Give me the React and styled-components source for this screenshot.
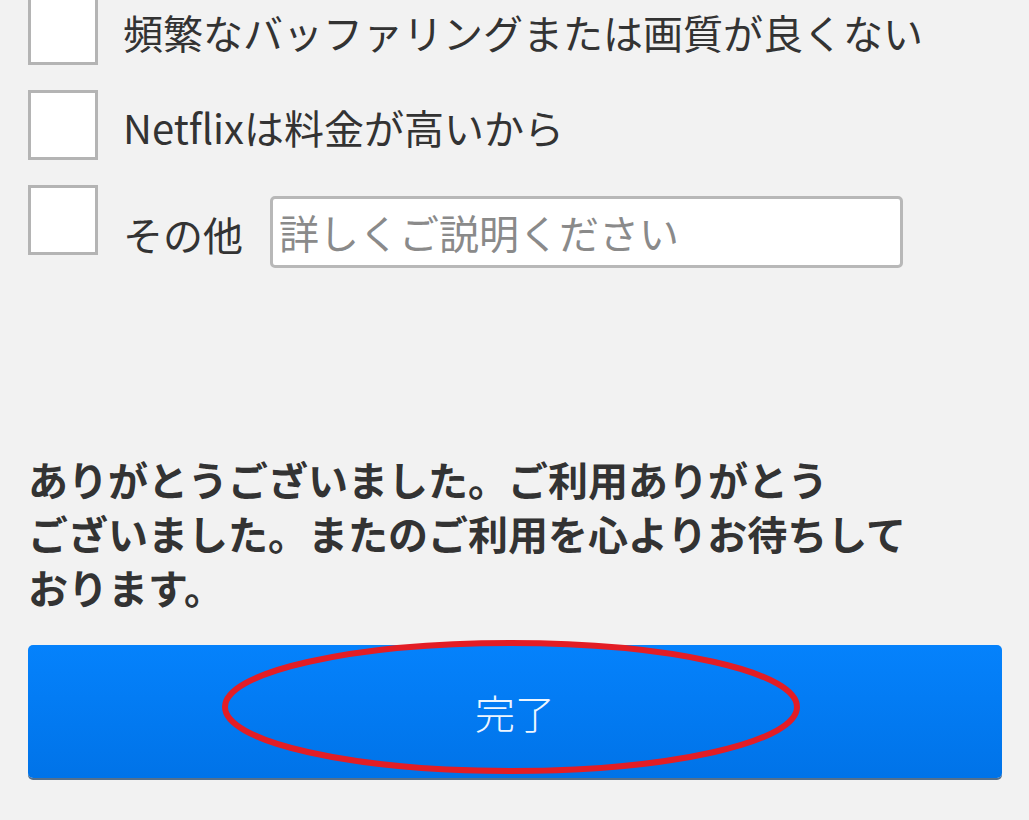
import React from "react";
import styled, { createGlobalStyle } from "styled-components";

const GlobalStyle = createGlobalStyle`
  html, body {
    margin: 0;
    padding: 0;
    background: #f2f2f2;
  }
  body {
    font-family: "Noto Sans CJK JP", "Noto Sans", sans-serif;
    color: #333;
    overflow: hidden;
  }
`;

const reasons = [
  { id: 1, label: "頻繁なバッファリングまたは画質が良くない" },
  { id: 2, label: "Netflixは料金が高いから" },
];

const App = () => {
  return (
    <>
      <GlobalStyle />
      <Page>
        <OptionList>
          {reasons.map((r) => (
            <OptionRow key={r.id}>
              <CheckBox />
              <OptionLabel>{r.label}</OptionLabel>
            </OptionRow>
          ))}
          <OptionRow $top>
            <CheckBox />
            <OtherGroup>
              <OptionLabel>その他</OptionLabel>
              <DetailInput placeholder="詳しくご説明ください" />
            </OtherGroup>
          </OptionRow>
        </OptionList>

        <Thanks>
          ありがとうございました。ご利用ありがとう
          <br />
          ございました。またのご利用を心よりお待ちして
          <br />
          おります。
        </Thanks>

        <DoneButton>
          完了
          <Mark viewBox="0 0 580 136" aria-hidden="true">
            <ellipse cx="290" cy="68" rx="286" ry="64" fill="none" stroke="#e31d25" strokeWidth="6" />
          </Mark>
        </DoneButton>
      </Page>
    </>
  );
};

export default App;

const Page = styled.main`
  width: 1029px;
  height: 820px;
  box-sizing: border-box;
  padding: 0 27px 0 28px;
  display: flex;
  flex-direction: column;
`;

const OptionList = styled.ul`
  list-style: none;
  margin: -5px 0 0;
  padding: 0;
  display: flex;
  flex-direction: column;
  gap: 25px;
`;

const OptionRow = styled.li`
  display: flex;
  align-items: ${(p) => (p.$top ? "flex-start" : "center")};
  height: 70px;
`;

const CheckBox = styled.span`
  flex: none;
  width: 70px;
  height: 70px;
  box-sizing: border-box;
  border: 3px solid #b4b4b4;
  background: #fff;
`;

const OptionLabel = styled.span`
  margin-left: 25px;
  font-size: 40px;
  line-height: 50px;
  color: #333;
  white-space: nowrap;
  padding-top: 3px;
`;

const OtherGroup = styled.div`
  display: flex;
  align-items: center;
  margin-top: 11px;
`;

const DetailInput = styled.input`
  margin-left: 27px;
  width: 633px;
  height: 72px;
  box-sizing: border-box;
  border: 3px solid #b8b8b8;
  border-radius: 5px;
  background: #fff;
  padding: 0 6px;
  font-family: "Noto Sans CJK JP", sans-serif;
  font-size: 40px;
  color: #333;
  outline: none;

  &::placeholder {
    color: #8a8a8a;
  }
`;

const Thanks = styled.p`
  margin: 197px 0 0;
  font-size: 40px;
  font-weight: 700;
  line-height: 54px;
  color: #333;
  white-space: nowrap;
`;

const DoneButton = styled.button`
  position: relative;
  margin-top: 31px;
  width: 974px;
  height: 133px;
  border: none;
  border-radius: 5px;
  background: linear-gradient(#0582fc, #0073e8);
  box-shadow: 0 2px 0 #55708c;
  color: #eef6ff;
  font-family: "Noto Sans CJK JP", sans-serif;
  font-size: 40px;
  font-weight: 300;
  padding: 0;
  display: flex;
  align-items: center;
  justify-content: center;
`;

const Mark = styled.svg`
  position: absolute;
  left: 193px;
  top: -6px;
  width: 580px;
  height: 136px;
  pointer-events: none;
`;
